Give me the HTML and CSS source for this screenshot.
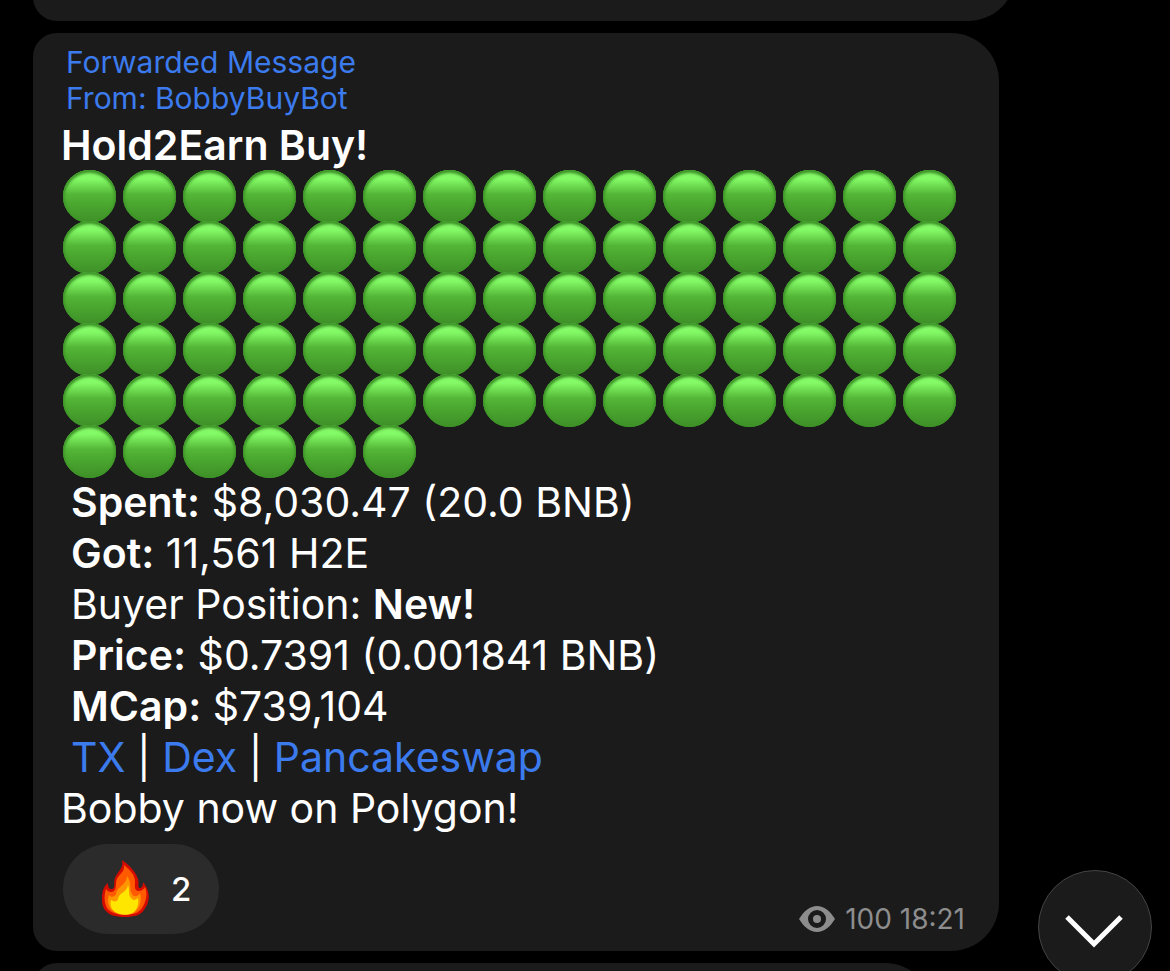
FILE: index.html
```html
<!DOCTYPE html>
<html lang="en">
<head>
<meta charset="utf-8">
<title>Chat</title>
<meta name="viewport" content="width=device-width, initial-scale=1">
<link rel="stylesheet" href="styles.css">
</head>
<body>
<main class="feed">
  <div class="bubble bubble-previous"></div>
  <article class="bubble message">
    <header class="forward">
      <div>Forwarded Message</div>
      <div>From: <a href="#bot">BobbyBuyBot</a></div>
    </header>
    <h1 class="line title">Hold2Earn Buy!</h1>
    <div class="dots" role="img" aria-label="81 green circles">
      <i></i><i></i><i></i><i></i><i></i><i></i><i></i><i></i><i></i><i></i><i></i><i></i><i></i><i></i><i></i>
      <i></i><i></i><i></i><i></i><i></i><i></i><i></i><i></i><i></i><i></i><i></i><i></i><i></i><i></i><i></i>
      <i></i><i></i><i></i><i></i><i></i><i></i><i></i><i></i><i></i><i></i><i></i><i></i><i></i><i></i><i></i>
      <i></i><i></i><i></i><i></i><i></i><i></i><i></i><i></i><i></i><i></i><i></i><i></i><i></i><i></i><i></i>
      <i></i><i></i><i></i><i></i><i></i><i></i><i></i><i></i><i></i><i></i><i></i><i></i><i></i><i></i><i></i>
      <i></i><i></i><i></i><i></i><i></i><i></i>
    </div>
    <div class="details">
      <p class="line"><b>Spent:</b> $8,030.47 (20.0 BNB)</p>
      <p class="line"><b>Got:</b> 11,561 H2E</p>
      <p class="line">Buyer Position: <b>New!</b></p>
      <p class="line"><b>Price:</b> $0.7391 (0.001841 BNB)</p>
      <p class="line"><b>MCap:</b> $739,104</p>
      <p class="line"><a href="#tx">TX</a> | <a href="#dex">Dex</a> | <a href="#pancakeswap">Pancakeswap</a></p>
    </div>
    <p class="line">Bobby now on Polygon!</p>
    <footer class="footer">
      <button class="reaction" type="button" aria-label="Fire, 2 reactions">
        <svg class="flame" viewBox="0 0 48 60" aria-hidden="true">
          <path fill="#d50b00" d="M21 1C28 6 35 13 37 20C38 24 37 28 38 29C41 29 42 27 42 23C47 29 49 36 47 43C46 47 44 49 43 51C40 56 33 58 24 58C14 58 8 56 4 51C1 47 1 42 1 38C1 32 3 27 7 24C7 28 8 30 11 30C15 29 12 24 14 19C17 12 23 9 21 1Z"/>
          <path fill="#ff5a00" d="M23 6C29 11 34 16 34 22C34 27 33 31 37 32C41 32 43 30 44 28C47 35 45 43 41 49C38 54 31 56 24 56C15 56 9 53 6 49C3 43 3 36 5 30C7 33 10 34 13 32C16 29 14 25 16 20C18 15 24 13 23 6Z"/>
          <path fill="#ff9500" d="M26 17C31 23 28 30 31 35C33 39 38 37 39 34C41 42 39 49 34 53C28 57 18 56 12 52C7 48 6 42 8 36C10 39 14 38 15 35C16 27 26 26 26 17Z"/>
          <path fill="#ffe600" d="M27 26C29 31 27 36 30 39C32 42 35 41 37 39C38 46 36 50 33 53C27 57 19 56 14 53C10 50 9 46 10 41C13 43 16 43 17 40C18 33 26 34 27 26Z"/>
        </svg>
        <span>2</span>
      </button>
      <div class="meta">
        <svg class="eye" viewBox="0 0 36 26" aria-hidden="true">
          <path fill="currentColor" fill-rule="evenodd" d="M0 13C5 5 11 0 18 0S31 5 36 13C31 21 25 26 18 26S5 21 0 13ZM18 4A9 9 0 1 0 18 22A9 9 0 1 0 18 4Z"/>
          <circle cx="18" cy="13" r="4" fill="currentColor"/>
        </svg>
        <span>100 <time datetime="18:21">18:21</time></span>
      </div>
    </footer>
  </article>
  <div class="bubble bubble-next"></div>
</main>
<button class="scroll-down" type="button" aria-label="Scroll to latest">
  <svg class="chevron" viewBox="0 0 58 34" aria-hidden="true"><path d="M2 2L29 29L56 2" fill="none" stroke="currentColor" stroke-width="5"/></svg>
</button>
</body>
</html>
```
FILE: styles.css
```css
* {
  box-sizing: border-box;
}

body {
  margin: 0;
  background: #000;
  color: #fff;
  font-family: Inter, "Liberation Sans", sans-serif;
}

a {
  color: #3c7bee;
  text-decoration: none;
}

.feed {
  display: flex;
  flex-direction: column;
  gap: 12px;
  height: 100vh;
  overflow: hidden;
  padding: 0 154px 0 33px;
}

.bubble {
  flex: none;
  background: #1b1b1b;
  border-radius: 24px 48px 48px 24px;
}

.bubble-previous {
  height: 96px;
  margin-top: -75px;
}

.message {
  margin-right: 17px;
  padding: 11px 34px 17px 28px;
}

.bubble-next {
  height: 96px;
  margin-right: 83px;
}

.forward {
  padding: 0 5px 4px;
  color: #3c7bee;
  font-size: 30px;
  line-height: 36px;
}

.line {
  margin: 0;
  font-size: 41px;
  font-weight: 400;
  line-height: 51px;
}

.title,
.line b {
  font-weight: 600;
}

.dots {
  display: grid;
  grid-template-columns: repeat(auto-fill, 53px);
  grid-auto-rows: 51px;
  align-items: center;
  column-gap: 7px;
  padding-left: 2px;
}

.dots i {
  height: 53px;
  border-radius: 50%;
  background: linear-gradient(#8dff70 4%, #82f865 18%, #54b637 46%, #4ba930 62%, #3f8f28 100%);
  box-shadow: inset 0 2px 3px 1px #3f9729, inset 0 0 2px 1px #3f9729;
}

.details {
  padding-left: 10px;
}

.footer {
  display: flex;
  align-items: flex-end;
  justify-content: space-between;
  padding: 10px 0 0 2px;
}

.reaction {
  display: flex;
  align-items: center;
  gap: 22px;
  height: 90px;
  padding: 0 28px 0 38px;
  border: 0;
  border-radius: 45px;
  background: #2b2b2b;
  color: #fff;
  font: 500 33px/40px Inter, "Liberation Sans", sans-serif;
}

.flame {
  width: 48px;
  height: 60px;
}

.meta {
  display: flex;
  align-items: center;
  gap: 10px;
  color: #8d8d8d;
  font-size: 28px;
  line-height: 30px;
}

.eye {
  width: 36px;
  height: 26px;
}

.scroll-down {
  position: fixed;
  right: 18px;
  bottom: -13px;
  display: flex;
  align-items: center;
  justify-content: center;
  width: 114px;
  height: 114px;
  padding: 10px 2px 0 0;
  border: 1px solid #444;
  border-radius: 50%;
  background: #1b1b1b;
  color: #fff;
}

.chevron {
  width: 58px;
  height: 34px;
}
```
